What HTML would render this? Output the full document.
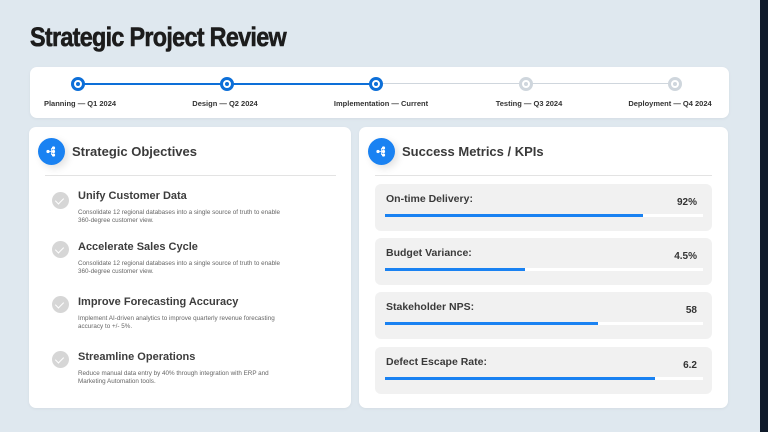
<!DOCTYPE html>
<html><head><meta charset="utf-8"><style>
*{margin:0;padding:0;box-sizing:border-box}
body{width:768px;height:432px;background:#dfe8ef;position:relative;overflow:hidden;font-family:"Liberation Sans",sans-serif;color:#333}
.a{position:absolute}
.strip{left:760px;top:0;width:8px;height:432px;background:#0f1a2a}
h1{position:absolute;left:30px;top:22px;font-family:"Liberation Sans",sans-serif;font-weight:bold;font-size:27px;color:#1c1c1c;letter-spacing:-0.8px;transform:scaleX(0.865);transform-origin:left;-webkit-text-stroke:0.6px #1c1c1c;white-space:nowrap}
.card{background:#fff;border-radius:7px;box-shadow:0 1px 3px rgba(0,0,0,.05)}
.node{width:14px;height:14px;border-radius:50%;border:3px solid #0d6fd8;background:#fff;margin:-7px 0 0 -7px}
.node::after{content:"";position:absolute;left:2px;top:2px;width:4px;height:4px;border-radius:50%;background:#0d6fd8}
.node.g{border-color:#cfd6dd}.node.g::after{background:#cfd6dd}
.lbl{font-size:7.5px;font-weight:bold;color:#333;transform:translateX(-50%);white-space:nowrap;top:99px}
.ic{width:27px;height:27px;border-radius:50%;background:#1a82f2;box-shadow:3px 3px 8px rgba(0,0,0,.12)}
.ht{font-size:13px;font-weight:bold;color:#3a3a3a}
.chk{width:17px;height:17px;border-radius:50%;background:#d6d6d6}
.chk::after{content:"";position:absolute;left:5px;top:4px;width:4px;height:7px;border:solid #fff;border-width:0 1.8px 1.8px 0;transform:rotate(45deg)}
.it{font-size:11px;font-weight:bold;color:#3d3d3d}
.ds{font-size:6.3px;color:#666;line-height:8px;width:215px}
.mb{left:375px;width:337px;height:47px;background:#f1f1f1;border-radius:6px}
.ml{left:11px;top:9px;font-size:10.5px;font-weight:bold;color:#3a3a3a}
.mv{right:15px;top:13px;font-size:10px;font-weight:bold;color:#333}
.bar{left:10px;top:30px;width:318px;height:3px;background:#fff}
.fill{left:0;top:0;height:3px;background:#1a82f2}
</style></head><body>
<div class="a strip"></div>
<h1>Strategic Project Review</h1>
<div class="a card" style="left:30px;top:67px;width:699px;height:51px"></div>
<div class="a" style="left:78px;top:83px;width:298px;height:2px;background:#0d6fd8"></div>
<div class="a" style="left:376px;top:83px;width:299px;height:1px;background:#cfd6dd"></div>
<div class="a node" style="left:78px;top:84px"></div>
<div class="a node" style="left:227px;top:84px"></div>
<div class="a node" style="left:376px;top:84px"></div>
<div class="a node g" style="left:526px;top:84px"></div>
<div class="a node g" style="left:675px;top:84px"></div>
<div class="a lbl" style="left:80px">Planning — Q1 2024</div>
<div class="a lbl" style="left:225px">Design — Q2 2024</div>
<div class="a lbl" style="left:381px">Implementation — Current</div>
<div class="a lbl" style="left:529px">Testing — Q3 2024</div>
<div class="a lbl" style="left:670px">Deployment — Q4 2024</div>

<div class="a card" style="left:29px;top:127px;width:322px;height:281px"></div>
<div class="a ic" style="left:38px;top:138px"><svg width="27" height="27"><g fill="#fff"><circle cx="10" cy="13.5" r="1.6"/><circle cx="15.5" cy="10" r="1.6"/><circle cx="15.5" cy="13.5" r="1.6"/><circle cx="15.5" cy="17" r="1.6"/></g><path d="M10 13.5H13.5M13.5 10V17" stroke="#fff" stroke-width=".8" fill="none"/></svg></div>
<div class="a ht" style="left:72px;top:144px">Strategic Objectives</div>
<div class="a" style="left:45px;top:175px;width:291px;height:1px;background:#e3e3e3"></div>
<div class="a chk" style="left:52px;top:192px"></div>
<div class="a it" style="left:78px;top:190px">Unify Customer Data</div>
<div class="a ds" style="left:78px;top:209px">Consolidate 12 regional databases into a single source of truth to enable 360-degree customer view.</div>
<div class="a chk" style="left:52px;top:241px"></div>
<div class="a it" style="left:78px;top:241px">Accelerate Sales Cycle</div>
<div class="a ds" style="left:78px;top:260px">Consolidate 12 regional databases into a single source of truth to enable 360-degree customer view.</div>
<div class="a chk" style="left:52px;top:296px"></div>
<div class="a it" style="left:78px;top:296px">Improve Forecasting Accuracy</div>
<div class="a ds" style="left:78px;top:315px">Implement AI-driven analytics to improve quarterly revenue forecasting accuracy to +/- 5%.</div>
<div class="a chk" style="left:52px;top:351px"></div>
<div class="a it" style="left:78px;top:351px">Streamline Operations</div>
<div class="a ds" style="left:78px;top:370px">Reduce manual data entry by 40% through integration with ERP and Marketing Automation tools.</div>

<div class="a card" style="left:359px;top:127px;width:369px;height:281px"></div>
<div class="a ic" style="left:368px;top:138px"><svg width="27" height="27"><g fill="#fff"><circle cx="10" cy="13.5" r="1.6"/><circle cx="15.5" cy="10" r="1.6"/><circle cx="15.5" cy="13.5" r="1.6"/><circle cx="15.5" cy="17" r="1.6"/></g><path d="M10 13.5H13.5M13.5 10V17" stroke="#fff" stroke-width=".8" fill="none"/></svg></div>
<div class="a ht" style="left:402px;top:144px">Success Metrics / KPIs</div>
<div class="a" style="left:375px;top:175px;width:337px;height:1px;background:#e3e3e3"></div>

<div class="a mb" style="top:184px"><div class="a ml">On-time Delivery:</div><div class="a mv">92%</div><div class="a bar"><div class="a fill" style="width:258px"></div></div></div>
<div class="a mb" style="top:238px"><div class="a ml">Budget Variance:</div><div class="a mv">4.5%</div><div class="a bar"><div class="a fill" style="width:140px"></div></div></div>
<div class="a mb" style="top:292px"><div class="a ml">Stakeholder NPS:</div><div class="a mv">58</div><div class="a bar"><div class="a fill" style="width:213px"></div></div></div>
<div class="a mb" style="top:347px"><div class="a ml">Defect Escape Rate:</div><div class="a mv">6.2</div><div class="a bar"><div class="a fill" style="width:270px"></div></div></div>
</body></html>
